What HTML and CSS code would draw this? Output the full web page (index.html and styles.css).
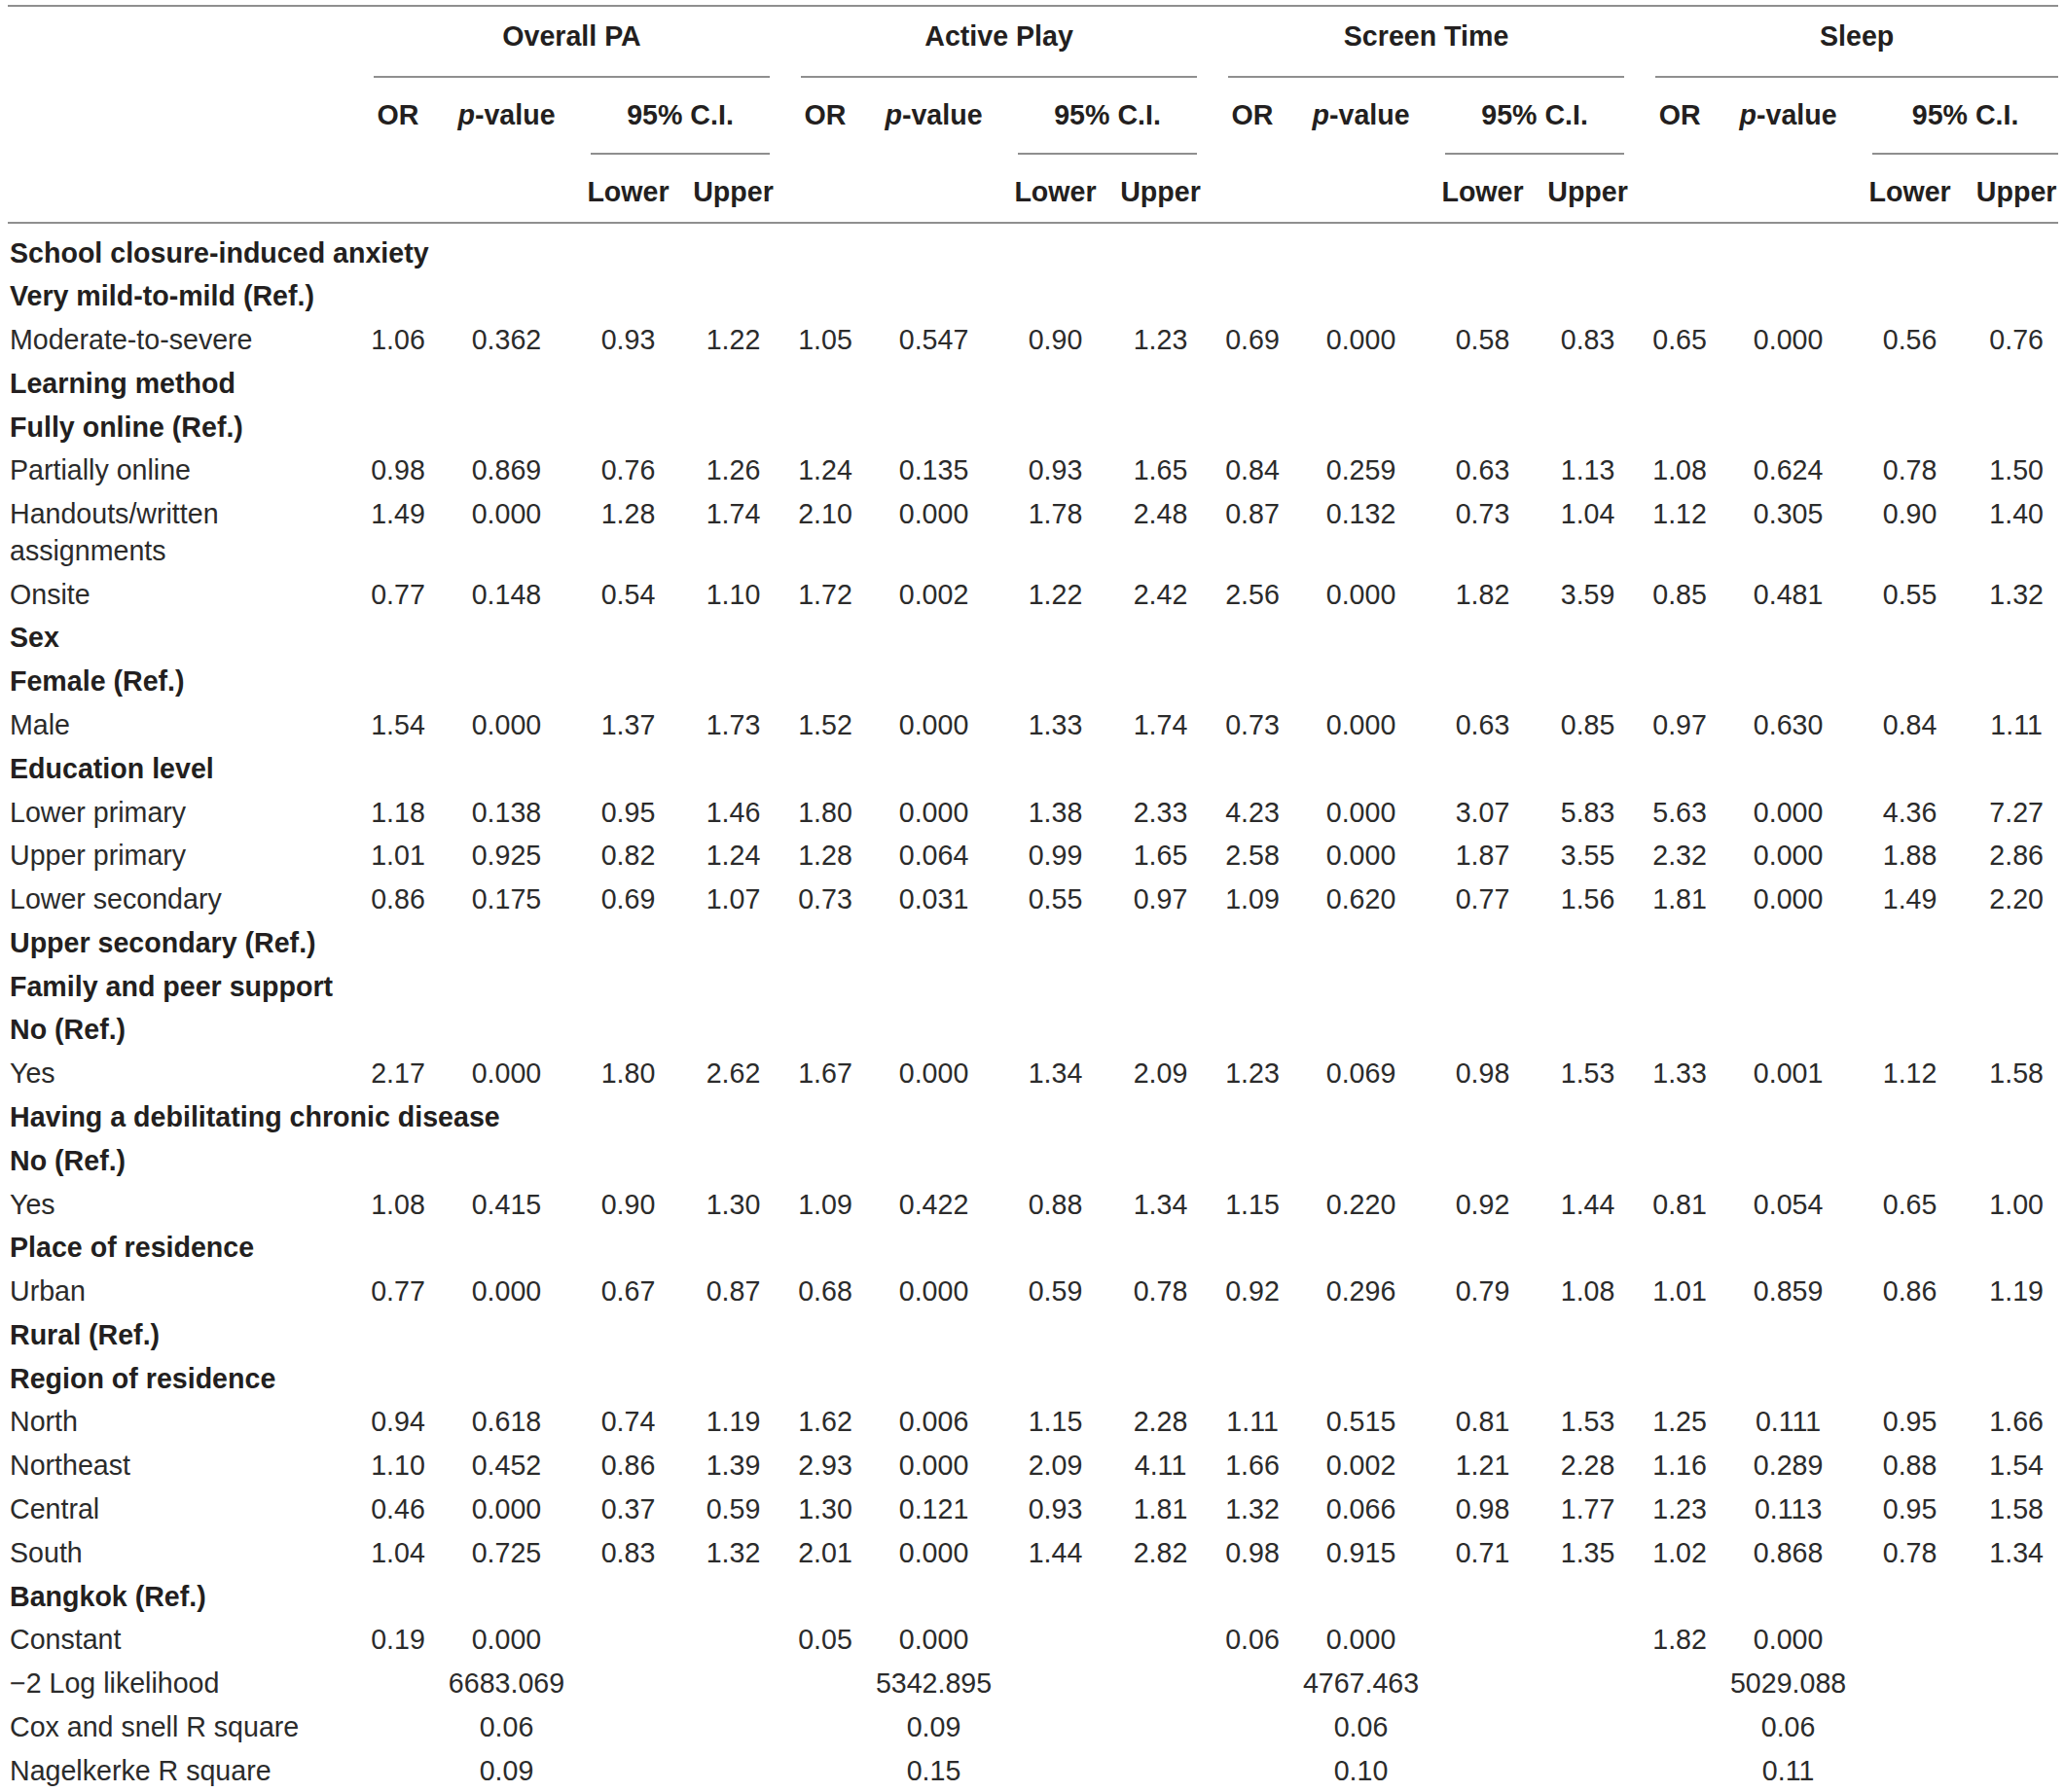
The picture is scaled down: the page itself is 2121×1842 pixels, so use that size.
FILE: index.html
```html
<!DOCTYPE html>
<html lang="en">
<head>
    <meta charset="UTF-8">
    <meta name="viewport" content="width=device-width, initial-scale=1.0">
    <title>Logistic regression: PA, active play, screen time, sleep</title>
    <link rel="stylesheet" href="styles.css">
</head>
<body>
    <table class="or-table">
        <colgroup>
            <col class="c-label">
            <col class="c-or"><col class="c-p"><col class="c-lo"><col class="c-up">
            <col class="c-or"><col class="c-p"><col class="c-lo"><col class="c-up">
            <col class="c-or"><col class="c-p"><col class="c-lo"><col class="c-up">
            <col class="c-or"><col class="c-p"><col class="c-lo"><col class="c-up-last">
        </colgroup>
        <thead>
            <tr>
                <th rowspan="3" class="hb"></th>
                <th colspan="4" class="grp"><div>Overall PA</div></th>
                <th colspan="4" class="grp"><div>Active Play</div></th>
                <th colspan="4" class="grp"><div>Screen Time</div></th>
                <th colspan="4" class="grp last"><div>Sleep</div></th>
            </tr>
            <tr>
                <th rowspan="2" class="sub hb">OR</th>
                <th rowspan="2" class="sub hb"><i>p</i>-value</th>
                <th colspan="2" class="ci"><div>95% C.I.</div></th>
                <th rowspan="2" class="sub hb">OR</th>
                <th rowspan="2" class="sub hb"><i>p</i>-value</th>
                <th colspan="2" class="ci"><div>95% C.I.</div></th>
                <th rowspan="2" class="sub hb">OR</th>
                <th rowspan="2" class="sub hb"><i>p</i>-value</th>
                <th colspan="2" class="ci"><div>95% C.I.</div></th>
                <th rowspan="2" class="sub hb">OR</th>
                <th rowspan="2" class="sub hb"><i>p</i>-value</th>
                <th colspan="2" class="ci last"><div>95% C.I.</div></th>
            </tr>
            <tr class="limits">
                <th class="lim hb">Lower</th><th class="lim hb">Upper</th>
                <th class="lim hb">Lower</th><th class="lim hb">Upper</th>
                <th class="lim hb">Lower</th><th class="lim hb">Upper</th>
                <th class="lim hb">Lower</th><th class="lim hb">Upper</th>
            </tr>
        </thead>
        <tbody id="rows"></tbody>
    </table>

    <script>
        // b = bold heading row, d = data row (16 values, "-" = empty)
        const rows = [
            ['b', 'School closure-induced anxiety'],
            ['b', 'Very mild-to-mild (Ref.)'],
            ['d', 'Moderate-to-severe', '1.06 0.362 0.93 1.22 1.05 0.547 0.90 1.23 0.69 0.000 0.58 0.83 0.65 0.000 0.56 0.76'],
            ['b', 'Learning method'],
            ['b', 'Fully online (Ref.)'],
            ['d', 'Partially online', '0.98 0.869 0.76 1.26 1.24 0.135 0.93 1.65 0.84 0.259 0.63 1.13 1.08 0.624 0.78 1.50'],
            ['d', 'Handouts/written assignments', '1.49 0.000 1.28 1.74 2.10 0.000 1.78 2.48 0.87 0.132 0.73 1.04 1.12 0.305 0.90 1.40'],
            ['d', 'Onsite', '0.77 0.148 0.54 1.10 1.72 0.002 1.22 2.42 2.56 0.000 1.82 3.59 0.85 0.481 0.55 1.32'],
            ['b', 'Sex'],
            ['b', 'Female (Ref.)'],
            ['d', 'Male', '1.54 0.000 1.37 1.73 1.52 0.000 1.33 1.74 0.73 0.000 0.63 0.85 0.97 0.630 0.84 1.11'],
            ['b', 'Education level'],
            ['d', 'Lower primary', '1.18 0.138 0.95 1.46 1.80 0.000 1.38 2.33 4.23 0.000 3.07 5.83 5.63 0.000 4.36 7.27'],
            ['d', 'Upper primary', '1.01 0.925 0.82 1.24 1.28 0.064 0.99 1.65 2.58 0.000 1.87 3.55 2.32 0.000 1.88 2.86'],
            ['d', 'Lower secondary', '0.86 0.175 0.69 1.07 0.73 0.031 0.55 0.97 1.09 0.620 0.77 1.56 1.81 0.000 1.49 2.20'],
            ['b', 'Upper secondary (Ref.)'],
            ['b', 'Family and peer support'],
            ['b', 'No (Ref.)'],
            ['d', 'Yes', '2.17 0.000 1.80 2.62 1.67 0.000 1.34 2.09 1.23 0.069 0.98 1.53 1.33 0.001 1.12 1.58'],
            ['b', 'Having a debilitating chronic disease'],
            ['b', 'No (Ref.)'],
            ['d', 'Yes', '1.08 0.415 0.90 1.30 1.09 0.422 0.88 1.34 1.15 0.220 0.92 1.44 0.81 0.054 0.65 1.00'],
            ['b', 'Place of residence'],
            ['d', 'Urban', '0.77 0.000 0.67 0.87 0.68 0.000 0.59 0.78 0.92 0.296 0.79 1.08 1.01 0.859 0.86 1.19'],
            ['b', 'Rural (Ref.)'],
            ['b', 'Region of residence'],
            ['d', 'North', '0.94 0.618 0.74 1.19 1.62 0.006 1.15 2.28 1.11 0.515 0.81 1.53 1.25 0.111 0.95 1.66'],
            ['d', 'Northeast', '1.10 0.452 0.86 1.39 2.93 0.000 2.09 4.11 1.66 0.002 1.21 2.28 1.16 0.289 0.88 1.54'],
            ['d', 'Central', '0.46 0.000 0.37 0.59 1.30 0.121 0.93 1.81 1.32 0.066 0.98 1.77 1.23 0.113 0.95 1.58'],
            ['d', 'South', '1.04 0.725 0.83 1.32 2.01 0.000 1.44 2.82 0.98 0.915 0.71 1.35 1.02 0.868 0.78 1.34'],
            ['b', 'Bangkok (Ref.)'],
            ['d', 'Constant', '0.19 0.000 - - 0.05 0.000 - - 0.06 0.000 - - 1.82 0.000 - -'],
            ['d', '\u22122 Log likelihood', '- 6683.069 - - - 5342.895 - - - 4767.463 - - - 5029.088 - -'],
            ['d', 'Cox and snell R square', '- 0.06 - - - 0.09 - - - 0.06 - - - 0.06 - -'],
            ['d', 'Nagelkerke R square', '- 0.09 - - - 0.15 - - - 0.10 - - - 0.11 - -']
        ];

        const tbody = document.getElementById('rows');

        rows.forEach(([kind, label, values]) => {
            const tr = document.createElement('tr');
            if (kind === 'b') {
                tr.className = 'b';
                tr.innerHTML = `<td class="lbl" colspan="17">${label}</td>`;
            } else {
                const cells = values.split(' ').map(v => `<td class="n">${v === '-' ? '' : v}</td>`);
                tr.innerHTML = `<td class="lbl">${label}</td>` + cells.join('');
            }
            tbody.appendChild(tr);
        });
    </script>
</body>
</html>
```

FILE: styles.css
```css
body {
    margin: 0;
    font-family: "Liberation Sans", Arial, sans-serif;
    font-size: 28.6px;
    color: #2b2b2b;
    background: #fff;
}
.or-table {
    margin: 5px 0 0 8px;
    width: 2107px;
    table-layout: fixed;
    border-collapse: separate;
    border-spacing: 0;
    border-top: 2px solid #8f8f8f;
    line-height: 37.6px;
}
.c-label { width: 360px; }
.c-or { width: 82px; }
.c-p { width: 141px; }
.c-lo { width: 109px; }
.c-up { width: 107px; }
.c-up-last { width: 98px; }

th {
    padding: 0;
    font-weight: bold;
    color: #231f20;
    text-align: center;
    vertical-align: top;
    white-space: nowrap;
}
.hb { border-bottom: 2px solid #8f8f8f; }
.grp { padding: 12px 16px 0; }
.grp div {
    padding-bottom: 21.4px;
    border-bottom: 2px solid #8f8f8f;
}
.sub { padding-top: 20.5px; }
.ci { padding: 20.5px 16px 0; }
.ci div {
    padding-bottom: 18.9px;
    border-bottom: 2px solid #8f8f8f;
}
.grp.last, .ci.last { padding-right: 0; }
.lim { padding: 20px 0 11.4px; }
.limits th:last-child { padding-left: 12px; }

td {
    padding: 3.6px 0;
    text-align: center;
    vertical-align: top;
}
td.lbl {
    text-align: left;
    padding-left: 2px;
    padding-right: 8px;
}
tr.b td {
    font-weight: bold;
    color: #231f20;
    white-space: nowrap;
}
tbody tr:first-child td { padding-top: 11.6px; }
td.n:last-child { padding-left: 12px; }
```
